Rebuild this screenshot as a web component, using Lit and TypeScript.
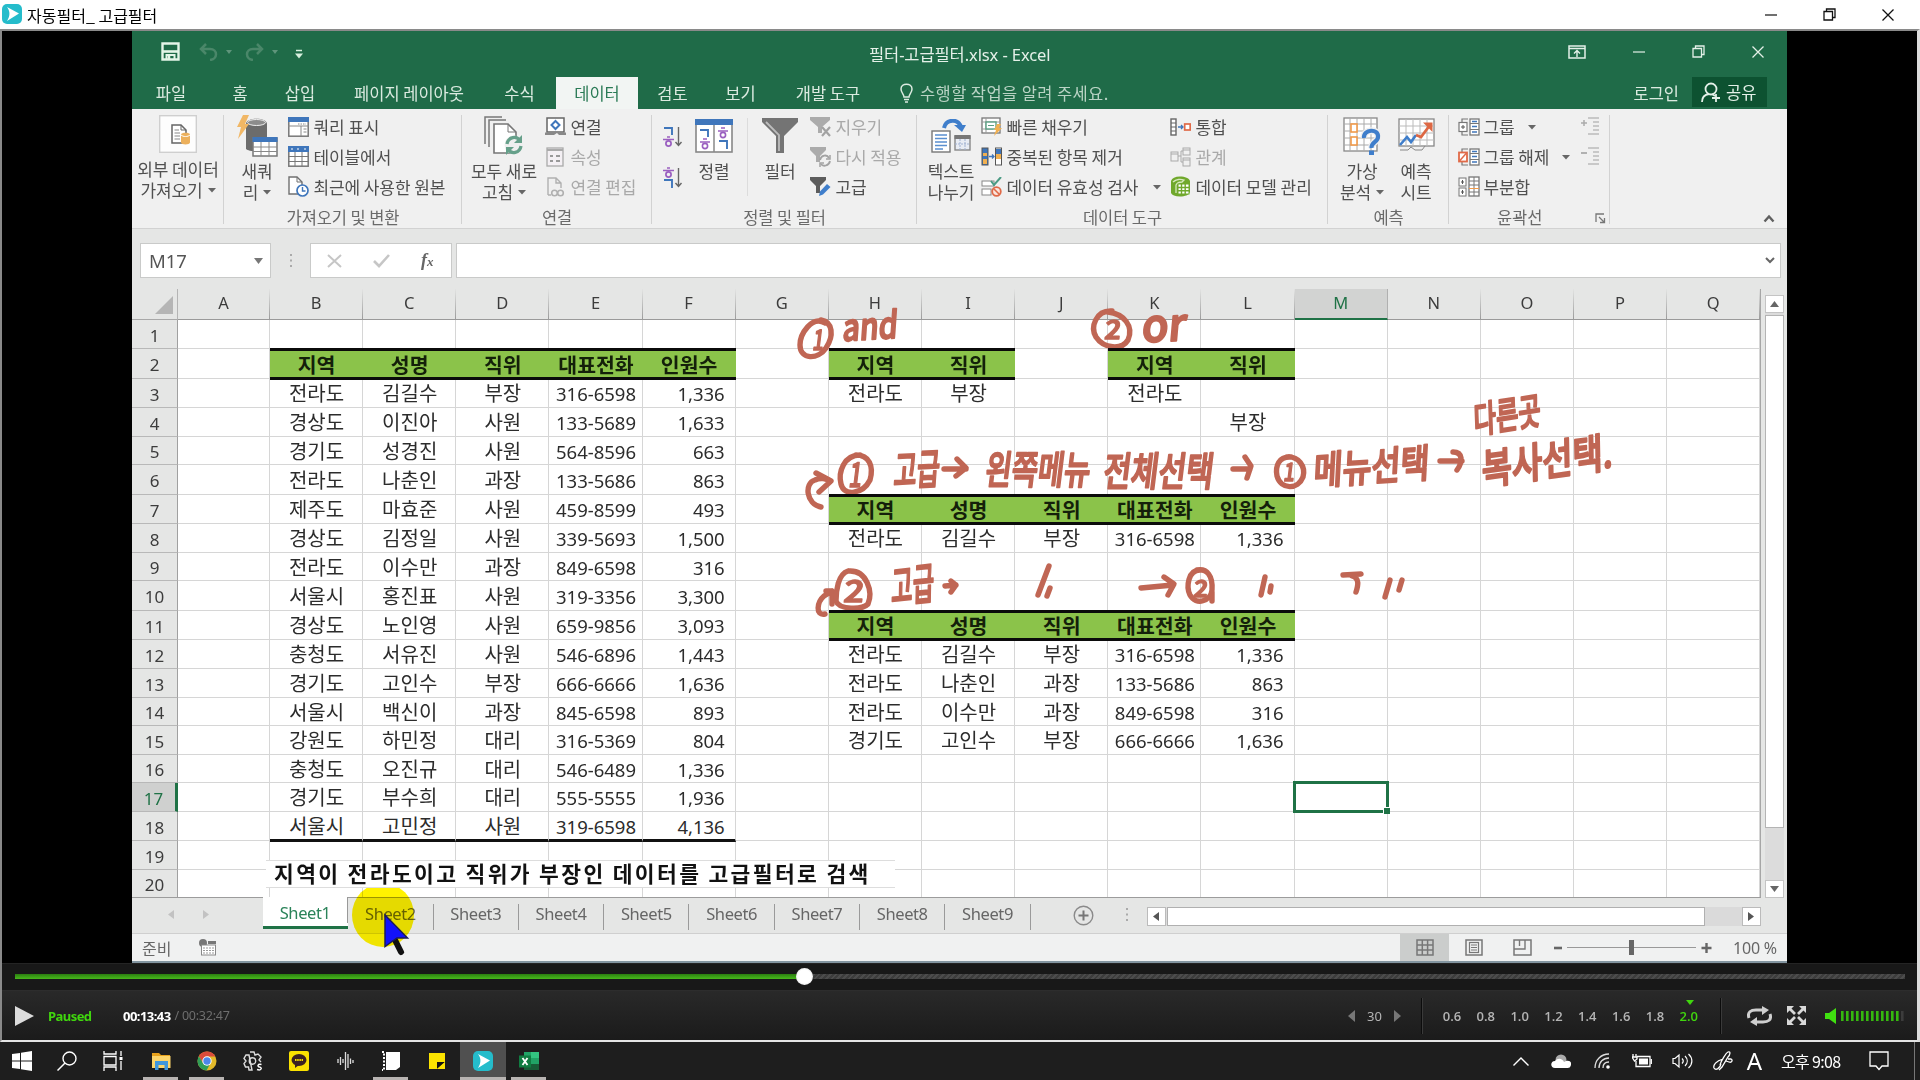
import { LitElement, html, svg, css, nothing } from "lit";
import { customElement } from "lit/decorators.js";
import { classMap } from "lit/directives/class-map.js";

const ic = (w: number, h: number, body: unknown, cls = "") =>
  html`<svg class=${cls} width=${w} height=${h} viewBox="0 0 ${w} ${h}" fill="none">${body}</svg>`;

const caret = html`<svg class="caret" width="8" height="5" viewBox="0 0 8 5"><path d="M0 0H8L4 4.6Z" fill="#666"/></svg>`;

/* ---------- ribbon icons ---------- */
const I = {
  external: ic(38, 38, svg`<rect x=".7" y=".7" width="36.6" height="36.6" fill="#fdfdfd" stroke="#cfcfcf" stroke-width="1.4"/>
    <path d="M13 10H22L27 15V28H13Z" fill="#fff" stroke="#666" stroke-width="1.5"/><path d="M22 10V15H27" stroke="#666"/>
    <path d="M15.5 15H20M15.5 18H21M15.5 21H21M15.5 24H21" stroke="#888" stroke-width="1.2"/>
    <path d="M22 19.5C22 17 31 17 31 19.5V27.5C31 30 22 30 22 27.5Z" fill="#ecb05c"/><path d="M22 20C24 22 29 22 31 20" stroke="#fff"/>`),
  newQuery: ic(42, 44, svg`<path d="M10 10C10 3 31 3 31 10V35C28 38 13 38 10 35Z" fill="#6c6c6c"/><ellipse cx="20.500" cy="8.500" rx="9" ry="3" fill="#8c8c8c" stroke="#efefef"/>
    <path d="M7 1H13L9 10H13L2 25L5 13H1Z" fill="#f1b765"/>
    <rect x="17" y="24" width="24" height="18" fill="#fff" stroke="#777" stroke-width="1.5"/><rect x="16.500" y="23" width="25" height="5" fill="#3f76bb"/>
    <path d="M17 33H41M17 37.500H41M25 28V42M33 28V42" stroke="#888"/>`),
  queryShow: ic(21, 20, svg`<rect x=".8" y=".8" width="19.4" height="18.400" fill="#fff" stroke="#777" stroke-width="1.500"/><rect x="0" y="0" width="21" height="5" fill="#3f76bb"/><path d="M0 9H21M13 9V19M15.500 12H18.500M15.500 15H18.500" stroke="#888"/><path d="M10 7H18" stroke="#888" stroke-dasharray="1.500 1"/>`),
  fromTable: ic(21, 21, svg`<rect x=".8" y=".8" width="19.4" height="19.400" fill="#fff" stroke="#777" stroke-width="1.500"/><rect x="0" y="0" width="21" height="6" fill="#3f76bb"/><path d="M3 3H5M9 3H12M16 3H18" stroke="#fff" stroke-dasharray="2 1"/><path d="M0 10.500H21M0 15.500H21M7 6V20M14 6V20" stroke="#777"/>`),
  recent: ic(21, 21, svg`<path d="M1 1H9L14 6V18H1Z" fill="#fff" stroke="#707070" stroke-width="1.400"/><path d="M9 1V6H14" stroke="#707070"/><circle cx="14.500" cy="14.500" r="5.500" fill="#fff" stroke="#3f76bb" stroke-width="1.700"/><path d="M14.500 11V15H17.500" stroke="#3f76bb" stroke-width="1.400"/>`),
  refreshAll: ic(40, 40, svg`<path d="M1 28V1H18M5 31V4H22" stroke="#777" stroke-width="1.500"/><path d="M10 8H24L32 16V37H10Z" fill="#fff" stroke="#777" stroke-width="1.600"/><path d="M24 8V16H32" stroke="#777"/>
    <circle cx="30" cy="29" r="9.500" fill="#efefef"/><path d="M23 28C24 21 33 19 36 25M37 30C36 37 27 39 24 33" stroke="#66a08a" stroke-width="3.200"/><path d="M38 19V27H30Z" fill="#66a08a"/><path d="M22 39V31H30Z" fill="#66a08a"/>`),
  conn: ic(21, 20, svg`<rect x="2" y="1" width="17" height="14" fill="#fff" stroke="#666" stroke-width="1.500"/><path d="M0 15.500H21V18H14L12 16L9 18H0Z" fill="#888"/><path d="M10.500 4L14.500 8L10.500 12L6.500 8Z" stroke="#3f76bb" stroke-width="2"/>`),
  props: ic(21, 20, svg`<rect x="2" y="1" width="16" height="18" fill="#f4f0f4" stroke="#aaa" stroke-width="1.300"/><path d="M2 3H18" stroke="#aaa" stroke-width="2"/><path d="M5 9H8M11 9H15M5 14H8M11 14H15" stroke="#999" stroke-width="2"/>`),
  editLink: ic(21, 20, svg`<path d="M3 18V1H11L16 6V11M3 18H6M11 1V6H16" stroke="#b0b0b0" stroke-width="1.400"/><circle cx="9.500" cy="16" r="2.800" stroke="#b0b0b0" stroke-width="1.600"/><circle cx="15.500" cy="16" r="2.800" stroke="#b0b0b0" stroke-width="1.600"/>`),
  sortAsc: ic(20, 22, svg`<path d="M1 2H9V9" stroke="#3f76bb" stroke-width="1.900"/><path d="M4 11H7M0 13.500H11" stroke="#9a5fc0" stroke-width="1.700"/><circle cx="5.500" cy="17.500" r="2.600" stroke="#9a5fc0" stroke-width="1.700"/><path d="M15.500 1V19M12.500 16L15.500 19.500L18.500 16" stroke="#666" stroke-width="1.400"/>`),
  sortDesc: ic(20, 22, svg`<path d="M4 1H7M0 3.500H11" stroke="#9a5fc0" stroke-width="1.700"/><circle cx="5.500" cy="7.500" r="2.600" stroke="#9a5fc0" stroke-width="1.700"/><path d="M1 13H9V21" stroke="#3f76bb" stroke-width="1.900"/><path d="M15.500 1V19M12.500 16L15.500 19.500L18.500 16" stroke="#666" stroke-width="1.400"/>`),
  sort: ic(38, 34, svg`<rect x="1" y="1" width="36" height="32" fill="#fff" stroke="#888" stroke-width="1.600"/><rect x="0" y="0" width="38" height="6" fill="#3f76bb"/><path d="M19 6V33" stroke="#888" stroke-width="1.500"/>
    <path d="M5 11H13V18" stroke="#3f76bb" stroke-width="1.900"/><path d="M8 20H12M5 23H15" stroke="#9a5fc0" stroke-width="1.600"/><circle cx="10" cy="27" r="2.600" stroke="#9a5fc0" stroke-width="1.600"/>
    <path d="M26 9H30M23 12H33" stroke="#9a5fc0" stroke-width="1.600"/><circle cx="28" cy="16" r="2.600" stroke="#9a5fc0" stroke-width="1.600"/><path d="M24 22H32V30" stroke="#3f76bb" stroke-width="1.900"/>`),
  filter: ic(36, 36, svg`<path d="M0 0H36V4L22 18V35H14V18L0 4Z" fill="#747474"/><path d="M4 4L17 17V33" stroke="#bdbdbd" stroke-width="1.800"/>`),
  clear: ic(22, 20, svg`<path d="M0 0H20V3L12 10V16H8V10L0 3Z" fill="#ababab"/><path d="M12 10L20 19M20 10L12 19" stroke="#a2a2a2" stroke-width="2.200"/>`),
  reapply: ic(22, 20, svg`<path d="M0 0H16V3L10 9V15H6V9L0 3Z" fill="#ababab"/><path d="M10 13C11 8 17 7 19 11M20 14C19 19 13 20 11 17" stroke="#a2a2a2" stroke-width="1.800"/><path d="M20 8V12H16M10 20V16H14" stroke="#a2a2a2" stroke-width="1.500"/>`),
  advanced: ic(22, 20, svg`<path d="M0 0H16V3L10 9V16H6V9L0 3Z" fill="#5c5c5c"/><path d="M9 19L10 14.500L17 7L20.500 10L13 17.500Z" fill="#3f7ecb"/>`),
  textCols: ic(40, 34, svg`<rect x="1" y="12" width="18" height="21" fill="#fff" stroke="#777" stroke-width="1.400"/><path d="M4 16H16M4 19.500H16M4 23H16M4 26.500H16M4 30H12" stroke="#5a8fd0" stroke-width="1.400"/>
    <path d="M13 9C15 0 27 -1 30 8" stroke="#3f7ecb" stroke-width="4"/><path d="M23 6H35L31 13Z" fill="#3f7ecb"/>
    <rect x="24" y="17" width="15" height="14" fill="#e8ecf4" stroke="#888" stroke-width="1.400"/><rect x="23.500" y="16" width="16" height="4" fill="#777"/><path d="M24 25H39M29 20V31M34 20V31" stroke="#9fb0d0" stroke-dasharray="2 1"/>`),
  flash: ic(21, 19, svg`<rect x="1" y="1" width="18" height="15" fill="#fff" stroke="#777" stroke-width="1.300"/><path d="M1 5H19M1 12H12M5 1V16" stroke="#999"/><rect x="5" y="5" width="10" height="7" stroke="#5ba083" fill="#fff" stroke-width="1.400"/><path d="M7 8.500H13" stroke="#5ba083"/><path d="M16 7H20L18 11H21L13 19L15 13H13Z" fill="#f1b050"/>`),
  dup: ic(21, 19, svg`<rect x="1" y="1" width="6" height="17" fill="#3f76bb" stroke="#555"/><rect x="2" y="6" width="4" height="3" fill="#f1b050"/><rect x="2" y="12" width="4" height="5" fill="#f1b050"/><path d="M8 9.500H13M11 7.500L13 9.500L11 11.500" stroke="#3f76bb" stroke-width="1.300"/><rect x="14.500" y="1" width="6" height="17" fill="#fff" stroke="#555"/><rect x="15" y="2" width="5" height="5" fill="#3f76bb"/><rect x="15" y="7" width="5" height="5" fill="#f1b050"/>`),
  valid: ic(21, 20, svg`<rect x="1" y="4" width="12" height="5" fill="#fff" stroke="#888"/><rect x="1" y="12" width="9" height="6" fill="#fff" stroke="#888"/><path d="M10 4L13 8L20 0" stroke="#4b9b84" stroke-width="2"/><circle cx="15.500" cy="14.500" r="4.300" fill="#fbe5dc" stroke="#e06a48" stroke-width="1.800"/><path d="M12.500 11.500L18.500 17.500" stroke="#e06a48" stroke-width="1.600"/>`),
  consol: ic(21, 18, svg`<rect x="1" y="1" width="5" height="16" fill="#fff" stroke="#666" stroke-width="1.400"/><path d="M1 5H6M1 9H6M1 13H6" stroke="#666"/><path d="M8 9H13M11 7L13 9L11 11" stroke="#3f76bb" stroke-width="1.300"/><rect x="14.700" y="6" width="5.500" height="6" stroke="#e06a48" stroke-width="1.700" fill="#fff"/>`),
  rel: ic(21, 20, svg`<rect x="1" y="5" width="7" height="9" stroke="#aaa"/><rect x="13" y="1" width="7" height="7" stroke="#aaa"/><rect x="13" y="11" width="7" height="8" stroke="#aaa"/><path d="M8 9H11V4H13M11 9V15H13M1 7H8M13 3H20M13 13H20" stroke="#aaa"/>`),
  model: ic(21, 21, svg`<path d="M10 .5C15 .5 19 2 20 5V16C19 19 15 20.500 10 20.500C5 20.500 2 19 1 17V5C2 2 5 .5 10 .5Z" fill="#70a82c"/><path d="M3 6C6 3 11 3 14 4L12 6C9 6 7 7 6 9V17" stroke="#d6e9be" stroke-width="1.300"/><rect x="8" y="8" width="11" height="10" fill="#fff" stroke="#70a82c"/><path d="M8 11.500H19M8 14.800H19M11.500 8V18M15.200 8V18" stroke="#70a82c" stroke-width="1.400"/>`),
  whatif: ic(38, 38, svg`<rect x="1" y="1" width="33" height="33" fill="#fff" stroke="#888" stroke-width="1.300"/><path d="M7 1V34M14 1V34M21 1V34M28 1V34M1 7H34M1 14H34M1 21H34M1 28H34" stroke="#aaa"/><rect x="8" y="7" width="6" height="8" fill="#fff" stroke="#f09a4a" stroke-width="1.600"/><rect x="8" y="20" width="6" height="8" fill="#fff" stroke="#f09a4a" stroke-width="1.600"/>
    <path d="M21 21C20 12 36 11 35 20C35 25 28 25 28.500 31" stroke="#efefef" stroke-width="7"/><path d="M21 21C20 12 36 11 35 20C35 25 28 25 28.500 31" stroke="#3f7ecb" stroke-width="4.200"/><rect x="26" y="33.500" width="5" height="4.500" fill="#3f7ecb"/>`),
  forecast: ic(37, 36, svg`<rect x="1" y="1" width="35" height="27" fill="#fff" stroke="#888" stroke-width="1.300"/><path d="M8 1V28M15 1V28M22 1V28M29 1V28M1 8H36M1 15H36M1 22H36" stroke="#bbb"/><path d="M2 32H10L13 29L17 32H24L27 28" stroke="#888"/><path d="M2 27L9 19L13 24L18 17" stroke="#3f7ecb" stroke-width="2.600"/><path d="M18 17L23 19L32 7" stroke="#dd6844" stroke-width="2.800"/><path d="M25 4.500H34.500V14Z" fill="#dd6844"/>`),
  group: ic(22, 18, svg`<path d="M4 4V1H10M4 14V17H10" stroke="#777" stroke-width="1.200"/><rect x="1" y="4.500" width="8" height="9" fill="#fff" stroke="#777" stroke-width="1.200"/><path d="M5 7V11M3 9H7" stroke="#555"/><rect x="12" y="1" width="9" height="16" fill="#fff" stroke="#777" stroke-width="1.300"/><path d="M12 5.500H21M12 11.500H21" stroke="#777"/><path d="M14 3.500H19M14 8.500H19M14 14H19" stroke="#3f76bb" stroke-width="1.400"/>`),
  ungroup: ic(22, 18, svg`<path d="M4 4V1H10M4 14V17H10" stroke="#777" stroke-width="1.200"/><rect x="1" y="4.500" width="8" height="9" fill="#fff" stroke="#e06a48" stroke-width="1.800"/><path d="M1.500 13L8.500 5" stroke="#e06a48" stroke-width="1.500"/><rect x="12" y="1" width="9" height="16" fill="#fff" stroke="#777" stroke-width="1.300"/><path d="M12 5.500H21M12 11.500H21" stroke="#777"/><path d="M14 3.500H19M14 8.500H19M14 14H19" stroke="#3f76bb" stroke-width="1.400"/>`),
  subtotal: ic(22, 21, svg`<rect x="1" y="2" width="7" height="8" fill="#fff" stroke="#777"/><rect x="1" y="12" width="7" height="8" fill="#fff" stroke="#777"/><path d="M4.500 4V8M3 6H6M4.500 14V18M3 16H6" stroke="#555"/><rect x="11" y="1" width="10" height="19" fill="#fff" stroke="#777" stroke-width="1.300"/><path d="M11 5H21M11 9H21M11 16H21M16 1V20" stroke="#777"/><path d="M11 12.500H21" stroke="#f09a4a"/>`),
  showDetail: ic(19, 18, svg`<path d="M0 6H6M3 3V9" stroke="#aaa" stroke-width="1.500"/><path d="M7 1H18M12 5H18M12 9H18M12 13H18M7 17H18" stroke="#bbb" stroke-width="1.500"/>`),
  hideDetail: ic(19, 18, svg`<path d="M0 6H6" stroke="#aaa" stroke-width="1.800"/><path d="M7 1H18M12 5H18M12 9H18M12 13H18M7 17H18" stroke="#bbb" stroke-width="1.500"/>`),
};

const BASE = css`
  :host { display: block; font-family: "Noto Sans", "Noto Sans CJK KR", sans-serif; box-sizing: border-box; }
  * { box-sizing: border-box; }
  svg { display: block; flex: none; }
`;

@customElement("excel-ribbon")
class ExcelRibbon extends LitElement {
  static styles = [BASE, css`
    .ribbon { display: flex; height: 120px; background: #f0f0f0; border-bottom: 1px solid #d2d2d2; color: #505050; font: 17px/21px "Noto Sans CJK KR", sans-serif; letter-spacing: -.1px; }
    .group { display: flex; flex-direction: column; position: relative; flex: none; }
    .group::after { content: ""; position: absolute; right: 0; top: 6px; width: 1px; height: 109px; background: #d2d2d2; }
    .body { display: flex; height: 99px; }
    .label { text-align: center; color: #6a6a6a; line-height: 21px; display: flex; justify-content: center; font-size: 16.5px; white-space: nowrap; }
    .big { display: flex; flex-direction: column; align-items: center; flex: none; white-space: nowrap; text-align: center; }
    .slot { height: 51px; display: flex; align-items: center; padding-top: 2px; }
    .b91 .slot { height: 49px; padding: 0; }
    .caret { display: inline-block; vertical-align: 4px; margin-left: 5px; }
    .rows { display: flex; flex-direction: column; padding-top: 2px; flex: none; }
    .row { display: flex; align-items: center; height: 30px; white-space: nowrap; }
    .row > .box { width: 25.5px; flex: none; padding-top: 1px; }
    .off { color: #a9a9a9; }
    .w91 { width: 92px; } .w238 { width: 238px; } .w190 { width: 190px; } .w265 { width: 265px; } .w411 { width: 411px; } .w121 { width: 121px; } .w161 { width: 161px; }
    .b91 { width: 92px; } .b58 { width: 56px; margin: 0 3px 0 5px; } .b78 { width: 78px; margin: 0 2px 0 3px; } .b60 { width: 60px; } .b56 { width: 56px; margin: 0 2px 0 6px; } .b54 { width: 54px; }
    .first { margin-left: 7px; }
    .sorts { display: flex; flex-direction: column; gap: 19px; padding-top: 17px; margin-left: 11px; width: 21px; }
    .divider { width: 1px; height: 78px; margin: 9px 2px 0 3px; background: #dcdcdc; }
    .colA { width: 189px; } .out { width: 123px; margin-left: 9px; }
    .gap1 { margin-left: 8px; } .gap2 { margin-left: 10px; }
    .launch { margin: 6px 0 0 0; }
    .lab-out { justify-content: flex-start; padding-left: 48px; gap: 53px; }
    .end { flex: 1; display: flex; justify-content: flex-end; align-items: flex-end; padding: 0 12px 5px 0; }
  `];
  big(cls: string, icon: unknown, a: string, b?: string, drop = false) {
    return html`<div class="big ${cls}"><div class="slot">${icon}</div><div>${a}${b ? html`<br>${b}${drop ? caret : nothing}` : nothing}</div></div>`;
  }
  row(icon: unknown, t: string, off = false, drop = "") {
    return html`<div class=${classMap({ row: true, off })}><div class="box">${icon}</div>${t}${drop ? html`<span class=${drop}>${caret}</span>` : nothing}</div>`;
  }
  render() {
    return html`<div class="ribbon">
      <div class="group w91"><div class="body">${this.big("b91", I.external, "외부 데이터", "가져오기", true)}</div></div>
      <div class="group w238"><div class="body">${this.big("b58", I.newQuery, "새쿼", "리", true)}
        <div class="rows">${this.row(I.queryShow, "쿼리 표시")}${this.row(I.fromTable, "테이블에서")}${this.row(I.recent, "최근에 사용한 원본")}</div></div>
        <div class="label">가져오기 및 변환</div></div>
      <div class="group w190"><div class="body">${this.big("b78", I.refreshAll, "모두 새로", "고침", true)}
        <div class="rows">${this.row(I.conn, "연결")}${this.row(I.props, "속성", true)}${this.row(I.editLink, "연결 편집", true)}</div></div>
        <div class="label">연결</div></div>
      <div class="group w265"><div class="body"><div class="sorts">${I.sortAsc}${I.sortDesc}</div>
        ${this.big("b60", I.sort, "정렬")}<div class="divider"></div>${this.big("b60", I.filter, "필터")}
        <div class="rows">${this.row(I.clear, "지우기", true)}${this.row(I.reapply, "다시 적용", true)}${this.row(I.advanced, "고급")}</div></div>
        <div class="label">정렬 및 필터</div></div>
      <div class="group w411"><div class="body">${this.big("b56", I.textCols, "텍스트", "나누기")}
        <div class="rows colA">${this.row(I.flash, "빠른 채우기")}${this.row(I.dup, "중복된 항목 제거")}${this.row(I.valid, "데이터 유효성 검사", false, "gap2")}</div>
        <div class="rows">${this.row(I.consol, "통합")}${this.row(I.rel, "관계", true)}${this.row(I.model, "데이터 모델 관리")}</div></div>
        <div class="label">데이터 도구</div></div>
      <div class="group w121"><div class="body"><div class="first"></div>${this.big("b54", I.whatif, "가상", "분석", true)}${this.big("b54", I.forecast, "예측", "시트")}</div>
        <div class="label">예측</div></div>
      <div class="group w161"><div class="body"><div class="rows out">${this.row(I.group, "그룹", false, "gap1")}${this.row(I.ungroup, "그룹 해제", false, "gap1")}${this.row(I.subtotal, "부분합")}</div>
        <div class="rows"><div class="row">${I.showDetail}</div><div class="row">${I.hideDetail}</div></div></div>
        <div class="label lab-out">윤곽선${ic(11, 11, svg`<path d="M1 9V1H9M4 4L9 9M9.500 5V9.500H5" stroke="#777" stroke-width="1.300"/>`, "launch")}</div></div>
      <div class="end">${ic(12, 9, svg`<path d="M1.500 7.500L6 2.500L10.500 7.500" stroke="#606060" stroke-width="2.400"/>`)}</div>
    </div>`;
  }
}

type Cell = { t: string; k?: "h" | "n" | "c" };
const COLS = "ABCDEFGHIJKLMNOPQ".split("");
const EDGE = [320, 349, 379, 408, 437, 465, 495, 524, 553, 581, 611, 640, 669, 698, 726, 755, 783, 812, 841, 870, 898];
const HEAD = ["지역", "성명", "직위", "대표전화", "인원수"];
const MAIN = [
  "전라도 김길수 부장 316-6598 1,336", "경상도 이진아 사원 133-5689 1,633", "경기도 성경진 사원 564-8596 663",
  "전라도 나춘인 과장 133-5686 863", "제주도 마효준 사원 459-8599 493", "경상도 김정일 사원 339-5693 1,500",
  "전라도 이수만 과장 849-6598 316", "서울시 홍진표 사원 319-3356 3,300", "경상도 노인영 사원 659-9856 3,093",
  "충청도 서유진 사원 546-6896 1,443", "경기도 고인수 부장 666-6666 1,636", "서울시 백신이 과장 845-6598 893",
  "강원도 하민정 대리 316-5369 804", "충청도 오진규 대리 546-6489 1,336", "경기도 부수희 대리 555-5555 1,936",
  "서울시 고민정 사원 319-6598 4,136",
].map((r) => r.split(" "));
const OR = ["전라도 김길수 부장 316-6598 1,336", "전라도 나춘인 과장 133-5686 863", "전라도 이수만 과장 849-6598 316", "경기도 고인수 부장 666-6666 1,636"].map((r) => r.split(" "));

const cells = new Map<string, Cell>();
const put = (col: number, row: number, vals: string[], head = false) =>
  vals.forEach((t, i) => t && cells.set(`${col + i}:${row}`, { t, k: head ? "h" : i === 4 ? "n" : "c" }));
put(1, 2, HEAD, true);
MAIN.forEach((r, i) => put(1, 3 + i, r));
put(7, 2, ["지역", "직위"], true); put(7, 3, ["전라도", "부장"]);
put(10, 2, ["지역", "직위"], true); put(10, 3, ["전라도"]); put(11, 4, ["부장"]);
put(7, 7, HEAD, true); put(7, 8, MAIN[0]);
put(7, 11, HEAD, true); OR.forEach((r, i) => put(7, 12 + i, r));

@customElement("sheet-grid")
class SheetGrid extends LitElement {
  static styles = [BASE, css`
    .wrap { display: flex; height: 609px; background: #e5e6e5; }
    .grid { display: grid; width: 1629px; height: 609px; grid-template-columns: 46px 92px repeat(16, 93.15px); overflow: hidden; border-bottom: 1px solid #9c9c9c; border-right: 1px solid #a6a6a6; position: relative; }
    .corner { display: flex; justify-content: flex-end; align-items: flex-end; padding: 0 4px 5px 0; border-bottom: 1px solid #a8a8a8; border-right: 1px solid #b4b4b4; }
    .ch { text-align: center; font-size: 16.5px; line-height: 28px; color: #3c3c3c; border-bottom: 1px solid #a4a4a4; border-right: 1px solid; border-image: linear-gradient(#e5e6e5, #999) 1; }
    .ch.sel { background: #d2d3d2; color: #1f7246; border-image: none; border-color: #b0b0b0; border-bottom: 2px solid #1f7246; }
    .rh { text-align: center; font-size: 17px; color: #3c3c3c; border-bottom: 1px solid #b8b8b8; border-right: 1px solid #a0a0a0; display: flex; align-items: center; justify-content: center; padding-top: 2px; }
    .rh.sel { background: #cfd0cf; color: #1f7246; border-right: 3px solid #1f7246; }
    .c { background: #fff; border-right: 1px solid #d6d6d6; border-bottom: 1px solid #d6d6d6; display: flex; align-items: center; justify-content: center; font: 20px/24px "Noto Sans", "Noto Sans CJK KR", sans-serif; color: #2c2c2c; white-space: nowrap; min-width: 0; position: relative; padding: 2px 0 0 1px; }
    .c.num { font-size: 18.500px; }
    .c.n { justify-content: flex-end; padding-right: 10px; font-size: 18.500px; }
    .c.h { background: #8bc34a; border: 0; border-top: 3px solid #0b0b0b; border-bottom: 3px solid #0b0b0b; margin: -1px 0; padding: 0 0 1px 0; font: 700 20.500px/22px "Noto Sans CJK KR", sans-serif; color: #14200a; z-index: 1; }
    .c.end { border-bottom: 3px solid #111; margin-bottom: -1px; z-index: 1; }
    .pick { position: absolute; left: -2px; top: -2px; right: -2px; bottom: -2px; border: 3px solid #1f7246; z-index: 2; }
    .pick::after { content: ""; position: absolute; right: -4px; bottom: -4px; width: 6px; height: 6px; background: #1f7246; border: solid #fff; border-width: 1px 0 0 1px; box-sizing: content-box; }
    .note { position: absolute; left: 134px; top: 571px; width: 629px; height: 28px; background: #fff; border: solid #ddd; border-width: 1px 0; z-index: 3; font: 700 21.500px/24px "Noto Sans CJK KR", sans-serif; letter-spacing: 2.350px; padding-left: 8px; color: #111; white-space: nowrap; }
    .scroll { flex: 1; display: flex; flex-direction: column; margin-left: 4px; padding: 6px 0 0 0; width: 20px; }
    .sb { width: 19px; height: 18px; background: #fff; border: 1px solid #c4c4c4; display: flex; align-items: center; justify-content: center; }
    .track { width: 19px; flex: 1; background: #dcdcdc; padding-top: 2px; }
    .thumb { height: 513px; background: #fff; border: 1px solid #b4b4b4; }
  `];
  render() {
    const rows = EDGE.slice(1).map((e, i) => `${e - EDGE[i]}px`).join(" ");
    return html`<div class="wrap"><div class="grid" style="grid-template-rows:31px ${rows}">
      <div class="corner">${ic(18, 18, svg`<path d="M18 0V18H0Z" fill="#b5b5b5"/>`)}</div>
      ${COLS.map((c) => html`<div class=${classMap({ ch: true, sel: c === "M" })}>${c}</div>`)}
      ${EDGE.slice(1).map((_, r) => html`<div class=${classMap({ rh: true, sel: r === 16 })}>${r + 1}</div>
        ${COLS.map((_c, c) => {
          const d = cells.get(`${c}:${r + 1}`);
          return html`<div class=${classMap({ c: true, h: d?.k === "h", n: d?.k === "n", num: /^\d/.test(d?.t ?? ""), end: r === 17 && c > 0 && c < 6 })}>${d?.t ?? nothing}${c === 12 && r === 16 ? html`<div class="pick"></div>` : nothing}</div>`;
        })}`)}
      <div class="note">지역이 전라도이고 직위가 부장인 데이터를 고급필터로 검색</div>
    </div>
    <div class="scroll"><div class="sb">${ic(9, 6, svg`<path d="M4.500 0L9 6H0Z" fill="#666"/>`)}</div><div class="track"><div class="thumb"></div></div><div class="sb">${ic(9, 6, svg`<path d="M0 0H9L4.500 6Z" fill="#666"/>`)}</div></div></div>`;
  }
}

@customElement("ink-layer")
class InkLayer extends LitElement {
  static styles = [BASE, css`
    .ink { width: 860px; height: 330px; overflow: visible; }
    .s { fill: none; stroke: #c06654; stroke-width: 5.400; stroke-linecap: round; stroke-linejoin: round; }
    .t { fill: #c06654; stroke: #c06654; stroke-width: 1.700; stroke-linejoin: round; font-family: "Noto Sans CJK KR", sans-serif; font-weight: 500; }
  `];
  word(t: string, x: number, base: number, w: number, size: number, rot = 0, sy = 1) {
    return svg`<text class="t" font-size=${size} textLength=${w} lengthAdjust="spacingAndGlyphs" transform="translate(${x} ${base}) rotate(${rot}) skewX(-7) scale(1 ${sy})">${t}</text>`;
  }
  render() {
    return html`<svg class="ink" viewBox="790 300 860 330">
      <path class="s" d="M825 323C812 315 800 334 800 345C800 360 818 360 826 348C834 336 833 322 821 320"/>
      ${this.word("1", 812, 350, 11, 28, 0)}
      ${this.word("and", 842, 341, 55, 32, -3, 1.15)}
      <path class="s" d="M1112 311C1096 310 1090 327 1096 337C1104 349 1122 350 1128 340C1134 326 1124 314 1108 312"/>
      ${this.word("2", 1104, 339, 16, 26, 0)}
      ${this.word("or", 1141, 342, 44, 36, -2, 1.25)}

      <path class="s" d="M821 507C806 504 804 483 815 480C821 477 826 479 831 481M816 473L831 481L819 492"/>
      <path class="s" d="M860 455C844 455 838 472 841 484C844 497 863 494 870 480C874 466 869 455 856 455"/>
      ${this.word("1", 848, 487, 13, 34)}
      ${this.word("고급", 893, 486, 46, 36, -3, 1.15)}
      <path class="s" d="M944 469H966M957 459L966 468L956 476"/>
      ${this.word("왼쪽메뉴", 984, 484, 105, 34, 0, 1.15)}
      ${this.word("전체선택", 1102, 486, 110, 34, 0, 1.18)}
      <path class="s" d="M1233 469H1250M1245 457L1251 466L1247 478"/>
      <path class="s" d="M1291 457C1279 456 1275 466 1277 476C1281 490 1298 490 1303 477C1306 466 1298 456 1287 457"/>
      ${this.word("1", 1283, 481, 11, 25)}
      ${this.word("메뉴선택", 1313, 485, 116, 34, -4, 1.15)}
      <path class="s" d="M1440 461H1462M1453 452C1463 452 1463 462 1457 470"/>
      ${this.word("다른곳", 1474, 434, 68, 32, -9, 1.15)}
      ${this.word("복사선택.", 1482, 485, 132, 34, -8, 1.22)}

      <path class="s" d="M825 614C815 616 817 602 824 596L832 591M826 591L832 591L832 604"/>
      <path class="s" d="M848 571C838 574 836 591 836 601C839 610 862 610 868 604C873 592 867 570 849 571"/>
      ${this.word("2", 843, 602, 20, 30)}
      ${this.word("고급", 891, 603, 43, 36, -6, 1.2)}
      <path class="s" d="M945 586L956 585M951 581L956 585L951 592"/>
      <path class="s" d="M1049 566L1038 595M1050 588L1047 596"/>
      <path class="s" d="M1141 588L1173 585M1164 577L1174 584L1168 595"/>
      <path class="s" d="M1200 570C1188 570 1186 587 1190 595C1196 606 1211 601 1212 590C1213 576 1207 568 1197 570M1212 592V601"/>
      ${this.word("2", 1193, 597, 14, 23)}
      <path class="s" d="M1265 577L1261 595M1271 586L1270 592"/>
      <path class="s" d="M1343 575L1361 574M1352 576C1360 578 1358 586 1356 592"/>
      <path class="s" d="M1390 580L1385 597M1402 580L1399 590"/>
    </svg>`;
  }
}

const TABS: [string, number, string?][] = [["파일", 78], ["홈", 60], ["삽입", 60], ["페이지 레이아웃", 158], ["수식", 68, "pull"], ["데이터", 82, "on"], ["검토", 69], ["보기", 67], ["개발 도구", 108]];
const logo = ic(20, 20, svg`<rect width="20" height="20" rx="5" fill="#25bccb"/><path d="M5 3L17 9.500L5 17C8 12 8.500 8 5 3Z" fill="#fff"/>`);
const winBtns = (c: string) => html`
  ${ic(12, 12, svg`<path d="M0 6H12" stroke=${c} stroke-width="1.200"/>`)}
  ${ic(13, 13, svg`<path d="M1 3.500H9.500V12H1ZM3.500 3V1H12V9.500H10" stroke=${c} stroke-width="1.300"/>`)}
  ${ic(12, 12, svg`<path d="M.5 .5L11.500 11.500M11.500 .5L.5 11.500" stroke=${c} stroke-width="1.300"/>`)}`;

const TASKS: { i: unknown; cls?: string }[] = [
  { cls: "n w1", i: ic(20, 20, svg`<path d="M0 3L8 2V9.500H0ZM9 1.800L20 0V9.500H9ZM0 10.500H8V18L0 17ZM9 10.500H20V20L9 18.200Z" fill="#fff"/>`) },
  { cls: "n", i: ic(20, 20, svg`<circle cx="12.500" cy="7.500" r="6.500" stroke="#fff" stroke-width="1.400"/><path d="M8 12L.5 19.500" stroke="#fff" stroke-width="1.500"/>`) },
  { cls: "n w3", i: ic(20, 20, svg`<path d="M1 0V3H13V0M1 20V16H13V20M1 5.500H13V14H1ZM18 0V5M18 10V19" stroke="#fff" stroke-width="1.300"/><rect x="16.500" y="6" width="3" height="3" fill="#fff"/>`) },
  { cls: "on", i: ic(19, 18, svg`<path d="M0 1H7L9 3H18V16H0Z" fill="#e8a21c"/><path d="M0 4H18.500V16H0Z" fill="#fcd56b"/><path d="M3 9H16V18H12.500V13H6.500V18H3Z" fill="#3f97dd"/>`) },
  { cls: "on", i: ic(20, 20, svg`<circle cx="10" cy="10" r="9.500" fill="#e2b92a"/><path d="M1.800 5.200A9.500 9.500 0 0 1 18.300 5.500H10L6 12Z" fill="#da4b3c"/><path d="M1.800 5.200A9.500 9.500 0 0 0 9.500 19.500L13 13L6 12Z" fill="#2f9d57"/><circle cx="10" cy="10" r="4.700" fill="#fff"/><circle cx="10" cy="10" r="3.700" fill="#4c86ea"/>`) },
  { i: ic(20, 20, svg`<path d="M7 1H11L12 4L15 3L18 6L16 9L18 11M9 19H6L5.500 16L2.500 16L1 12.500L3 10L1 7.500L3 4L6 4Z" stroke="#ddd" stroke-width="1.400"/><circle cx="9.500" cy="10" r="3.200" stroke="#ddd" stroke-width="1.400"/><path d="M18.500 13.500C14.500 12.500 14 15.500 16.500 16C19.500 16.500 18.500 20 14 18.500" stroke="#fff" stroke-width="1.400"/>`) },
  { i: ic(20, 20, svg`<rect width="20" height="20" rx="2" fill="#fae100"/><ellipse cx="10" cy="9" rx="7.500" ry="6" fill="#3b2222"/><path d="M6 13V17L10 14Z" fill="#3b2222"/><path d="M6 9H14" stroke="#fae100" stroke-width="2" stroke-dasharray="1.500 .700"/>`) },
  { i: ic(17, 20, svg`<path d="M1 8V12M3.500 6V14M6 8V12M8.500 1V19M11 3V17M13.500 7.500V13M16 9V12" stroke="#ddd" stroke-width="1.300"/>`) },
  { cls: "on", i: ic(20, 20, svg`<path d="M5 1H19V16L15 19H5Z" fill="#fff"/><path d="M1 1H3V19H1" stroke="#fff" stroke-width="2" stroke-dasharray="2 1.500"/>`) },
  { i: ic(16, 16, svg`<path d="M0 0H16V16H0Z" fill="#fbe300"/><path d="M8 16V9H16Z" fill="#111"/><path d="M8 16H16V9Z" fill="#fbe300" opacity=".85"/>`) },
  { cls: "on act", i: logo },
  { cls: "on", i: ic(20, 20, svg`<rect x="5" y="1" width="15" height="18" fill="#21a366"/><path d="M12 1H20V7H12Z" fill="#33c481"/><path d="M5 13H20V19H5Z" fill="#185c37"/><rect x="0" y="4.500" width="12" height="12" fill="#107c41"/><path d="M3.500 7L8.500 14M8.500 7L3.500 14" stroke="#fff" stroke-width="1.800"/>`) },
];

@customElement("app-root")
class AppRoot extends LitElement {
  static styles = [BASE, css`
    .page { width: 1920px; height: 1080px; overflow: hidden; background: #1d1d1d; display: flex; flex-direction: column; }
    .title { height: 29px; background: #fff; display: flex; align-items: center; padding: 0 26px 0 2px; font: 16px/28px "Noto Sans CJK KR", sans-serif; color: #000; }
    .title span { margin-left: 5px; flex: 1; }
    .title > svg { margin-bottom: 1px; }
    .wb { display: flex; align-items: center; gap: 46px; }
    .frame { height: 1013px; border: solid; border-width: 2px 3px 2px 2px; border-color: #8a8a8a #dcdcdc #e4e4e4 #8a8a8a; background: #000; display: flex; flex-direction: column; }
    .video { height: 932px; display: flex; padding-left: 130px; }
    .excel { width: 1655px; height: 932px; display: flex; flex-direction: column; background: #e5e6e5; position: relative; }
    .top { height: 46px; background: #1f6b48; display: flex; align-items: flex-start; color: #e4f0e8; padding: 0 23px 0 29px; }
    .qat { display: flex; align-items: center; height: 41px; width: 708px; }
    .m1 { margin-left: 19px; } .m2 { margin-left: 8px; } .m3 { margin-left: 13px; } .m4 { margin: 3px 0 0 17px; }
    .fname { flex: 1; font-size: 16.500px; line-height: 48px; letter-spacing: -.1px; }
    .top .wb { height: 41px; gap: 47px; }
    .tabs { height: 32px; background: #1f6b48; display: flex; color: #dbeae0; font: 16.500px/32px "Noto Sans CJK KR", sans-serif; white-space: nowrap; }
    .tab { text-align: center; flex: none; }
    .tab.on { background: #f2f5f3; color: #2a7a55; }
    .tab.pull { padding-right: 5px; }
    .tell { display: flex; align-items: center; gap: 7px; margin-left: 18px; flex: 1; color: #b9d3c4; letter-spacing: .4px; }
    .login { margin-right: 13px; }
    .share { width: 75px; height: 30px; background: #0d5231; display: flex; align-items: center; gap: 5px; padding-left: 9px; margin-right: 20px; color: #e4f0e8; }
    .fbar { display: flex; height: 60px; padding: 14px 6px 0 8px; flex: none; }
    .fb { height: 35px; background: #fff; border: 1px solid #c9cac9; display: flex; align-items: center; }
    .name { width: 131px; justify-content: space-between; padding: 0 7px 0 8px; font-size: 18.500px; color: #555; }
    .dots { width: 39px; display: flex; justify-content: center; align-items: center; height: 35px; }
    .fx { width: 142px; margin-right: 4px; padding-left: 16px; gap: 31px; }
    .f { font: italic 700 18px "Liberation Serif", serif; color: #666; }
    .f small { font-size: 13px; }
    .inp { flex: 1; justify-content: flex-end; padding-right: 5px; }
    .sheets { height: 36px; display: flex; border-bottom: 1px solid #cfcfcf; color: #666; font-size: 16.500px; line-height: 32px; flex: none; }
    .nav { width: 131px; display: flex; align-items: center; gap: 29px; padding: 0 0 2px 36px; }
    .sh { width: 85.300px; height: 33px; text-align: center; letter-spacing: -.4px; flex: none; padding: 0 1px 0 0; position: relative; }
    .sh::after { content: ""; position: absolute; right: 0; top: 6px; height: 26px; width: 1px; background: #9a9a9a; }
    .sh.on { background: #fff; color: #2a8359; height: 32px; border-bottom: 3px solid #1f7246; margin-top: -1px; }
    .sh.on::after { top: 0; background: #999; }
    .add { margin: 7px 0 0 42px; }
    .grip { margin: 10px 0 0 32px; }
    .hs { display: flex; margin: 9px 26px 0 19px; height: 19px; background: #dadada; flex: 1; justify-content: space-between; }
    .hb { width: 19px; height: 19px; background: #fff; border: 1px solid #bbb; display: flex; align-items: center; justify-content: center; }
    .ht { width: 538px; margin-right: 36px; border: 1px solid #b0b0b0; background: #fff; }
    .status { height: 27px; background: #f0f1f1; display: flex; align-items: center; color: #666; font-size: 16px; flex: none; padding-left: 10px; }
    .status .grow { flex: 1; }
    .macro { margin-left: 28px; }
    .view { width: 49px; height: 27px; display: flex; align-items: center; justify-content: center; }
    .view.on { background: #cbcdcc; }
    .pct { width: 45px; margin: 0 9px 0 20px; white-space: nowrap; font-size: 16px; letter-spacing: -.2px; }
    .strip { height: 2px; background: #8395a0; }
    .ink { position: absolute; left: 658px; top: 269px; }
    .spot { position: absolute; left: 220px; top: 852px; width: 62px; height: 64px; border-radius: 50%; background: #fff200; mix-blend-mode: multiply; }
    .ptr { position: absolute; left: 251px; top: 881px; }
    .seek { height: 27px; background: #181818; border-top: 1px solid #242424; padding: 10px 12px 0 13px; display: flex; }
    .done { width: 789px; height: 5px; background: linear-gradient(#2b7d10, #48b81c); position: relative; }
    .knob { position: absolute; right: -9px; top: -6px; width: 17px; height: 17px; border-radius: 50%; background: radial-gradient(#fff 55%, #c8c8c8); }
    .left { flex: 1; height: 5px; background: repeating-linear-gradient(135deg, #3c3c3c 0 2px, #4c4c4c 2px 4px); }
    .ctl { height: 50px; background: linear-gradient(#292929, #1b1b1b); border-top: 1px solid #2d2d2d; display: flex; align-items: center; font: 13px/20px "Noto Sans", sans-serif; color: #b4b4b4; padding-left: 13px; }
    .paused { color: #40d60e; font-weight: 700; width: 74px; margin-left: 13px; margin-right: 1px; letter-spacing: -.55px; font-size: 13px; }
    .time { color: #fff; font-weight: 700; letter-spacing: -.55px; font-size: 13px; }
    .total { color: #6e6e6e; letter-spacing: -.25px; font-size: 12.500px; margin-left: 4px; flex: 1; }
    .total i { font-style: normal; margin-right: 3px; }
    .skip { display: flex; align-items: center; gap: 12px; width: 73px; }
    .bar { width: 2px; height: 36px; background: linear-gradient(90deg, #0c0c0c 50%, #3a3a3a 50%); }
    .speeds { display: flex; width: 297px; padding-left: 12px; }
    .sp { width: 33.850px; text-align: center; font: 600 13px/20px "Open Sans", sans-serif; position: relative; }
    .sp.on { color: #40d60e; }
    .sp.on::before { content: ""; position: absolute; left: 14px; top: -6px; border: solid transparent; border-width: 5px 4px 0; border-top-color: #40d60e; }
    .loop { margin-left: 25px; } .full { margin-left: 15px; } .vol { margin: 0 12px 0 19px; }
    .task { height: 38px; display: flex; background: #1e1e1e; color: #fff; }
    .ti { width: 46px; height: 38px; display: flex; align-items: center; justify-content: center; position: relative; flex: none; }
    .ti.w1 { width: 44px; } .ti.n { width: 46px; } .ti.n.w1 { width: 44px; } .ti.w3 { margin-right: 2px; }
    .ti.on::after { content: ""; position: absolute; left: 5px; right: 6px; bottom: 0; height: 3px; background: #b8b4b2; }
    .ti.act { background: #505050; } .ti.act::after { left: 0; right: 0; }
    .tray { margin-left: auto; display: flex; align-items: center; padding-right: 5px; font: 16px/38px "Noto Sans CJK KR", sans-serif; }
    .t1 { margin-right: 22px; } .t2 { margin-right: 23px; } .t4 { margin-right: 20px; } .t5 { margin-right: 14px; }
    .ka { font: 400 24px/38px "Noto Sans", sans-serif; margin-right: 19px; }
    .clock { width: 62px; white-space: nowrap; letter-spacing: -.65px; margin-right: 26px; }
    .note { margin-right: 25px; }
    .peek { width: 1px; height: 38px; background: #777; }
  `];
  render() {
    return html`<div class="page">
      <div class="title">${logo}<span>자동필터_ 고급필터</span><div class="wb">${winBtns("#111")}</div></div>
      <div class="frame">
        <div class="video"><div class="excel">
          <div class="top">
            <div class="qat">
              ${ic(19, 19, svg`<path d="M1.500 1.500H17.500V17.500H1.500Z" stroke="#e4f5e8" stroke-width="2.400"/><path d="M2 9.500H17" stroke="#e4f5e8" stroke-width="2.600"/><path d="M5.500 18V13H13.500V18" stroke="#e4f5e8" stroke-width="2"/><path d="M8 14V17" stroke="#e4f5e8" stroke-width="2.500"/>`)}
              ${ic(19, 18, svg`<path d="M7 1L2 6L7 11M2 6H11C19 6 19 16 11 17" stroke="#4a8769" stroke-width="2.500"/>`, "m1")}
              ${ic(6, 4, svg`<path d="M0 0H6L3 4Z" fill="#5f957b"/>`, "m2")}
              ${ic(19, 18, svg`<path d="M12 1L17 6L12 11M17 6H8C0 6 0 16 8 17" stroke="#4a8769" stroke-width="2.500"/>`, "m3")}
              ${ic(6, 4, svg`<path d="M0 0H6L3 4Z" fill="#5f957b"/>`, "m2")}
              ${ic(8, 12, svg`<path d="M1 3.500H7" stroke="#d7f0de" stroke-width="1.500"/><path d="M0 6.500H8L4 11.500Z" fill="#d7f0de"/>`, "m4")}
            </div>
            <div class="fname">필터-고급필터.xlsx - Excel</div>
            <div class="wb">
              ${ic(18, 14, svg`<rect x="1" y="1" width="16" height="12" stroke="#e4f0e8" stroke-width="1.500"/><path d="M1 3.500H17M9 12V6M6 8.500L9 5.500L12 8.500" stroke="#e4f0e8" stroke-width="1.400"/>`)}
              ${winBtns("#e4f0e8")}
            </div>
          </div>
          <div class="tabs">
            ${TABS.map(([t, w, k]) => html`<div class="tab ${k ?? ""}" style="width:${w}px">${t}</div>`)}
            <div class="tell">${ic(13, 20, svg`<path d="M4 14C4 11 1 10 1 6C1 -.5 12 -.5 12 6C12 10 9 11 9 14ZM4 16.500H9M5 19H8" stroke="#dbeae0" stroke-width="1.500"/>`)}수행할 작업을 알려 주세요.</div>
            <div class="login">로그인</div>
            <div class="share">${ic(20, 21, svg`<circle cx="10" cy="7" r="5.500" stroke="#e4f0e8" stroke-width="1.800"/><path d="M1 20C1 15 4 12.500 8 12M11 12L14 14M15 12V20M11 16H19" stroke="#e4f0e8" stroke-width="1.800"/>`)}공유</div>
          </div>
          <excel-ribbon></excel-ribbon>
          <div class="fbar">
            <div class="fb name">M17${ic(9, 6, svg`<path d="M0 0H9L4.500 6Z" fill="#777"/>`)}</div>
            <div class="dots">${ic(2, 14, svg`<path d="M1 0V14" stroke="#aaa" stroke-width="2" stroke-dasharray="2 3.500"/>`)}</div>
            <div class="fb fx">
              ${ic(15, 14, svg`<path d="M1 1L14 13M14 1L1 13" stroke="#c6c6c6" stroke-width="2"/>`)}
              ${ic(17, 14, svg`<path d="M1 7L6 12L16 1" stroke="#c6c6c6" stroke-width="2.600"/>`)}
              <span class="f">f<small>x</small></span>
            </div>
            <div class="fb inp">${ic(10, 7, svg`<path d="M1 1L5 5L9 1" stroke="#666" stroke-width="2"/>`)}</div>
          </div>
          <sheet-grid></sheet-grid>
          <div class="sheets">
            <div class="nav">${ic(6, 9, svg`<path d="M6 0V9L0 4.500Z" fill="#c2c2c2"/>`)}${ic(6, 9, svg`<path d="M0 0V9L6 4.500Z" fill="#c2c2c2"/>`)}</div>
            ${[1, 2, 3, 4, 5, 6, 7, 8, 9].map((n) => html`<div class=${classMap({ sh: true, on: n === 1 })}>Sheet${n}</div>`)}
            ${ic(21, 21, svg`<circle cx="10.500" cy="10.500" r="9.300" stroke="#8a8a8a" stroke-width="1.400"/><path d="M10.500 5.500V15.500M5.500 10.500H15.500" stroke="#777" stroke-width="2"/>`, "add")}
            ${ic(2, 14, svg`<path d="M1 0V14" stroke="#aaa" stroke-width="2" stroke-dasharray="2 3.500"/>`, "grip")}
            <div class="hs"><div class="hb">${ic(6, 9, svg`<path d="M6 0V9L0 4.500Z" fill="#555"/>`)}</div><div class="ht"></div><div class="hb">${ic(6, 9, svg`<path d="M0 0V9L6 4.500Z" fill="#555"/>`)}</div></div>
          </div>
          <div class="status">준비
            ${ic(18, 17, svg`<circle cx="4" cy="4" r="4" fill="#777"/><path d="M9 2H17V5H9Z" fill="#777"/><rect x="2.500" y="6" width="14" height="10" fill="#fff" stroke="#888"/><path d="M4 9H15M4 11.500H15M4 14H15" stroke="#999" stroke-dasharray="2 1"/>`, "macro")}
            <div class="grow"></div>
            <div class="view on">${ic(18, 17, svg`<path d="M1 1H17V16H1ZM1 6H17M1 11H17M6.300 1V16M11.600 1V16" stroke="#777" stroke-width="1.500"/>`)}</div>
            <div class="view">${ic(18, 17, svg`<rect x="1" y="1" width="16" height="15" stroke="#777" stroke-width="1.500"/><rect x="4.500" y="3.500" width="9" height="10" stroke="#777" stroke-width="1.200"/><path d="M6 6H12M6 8.500H12M6 11H12" stroke="#777"/>`)}</div>
            <div class="view">${ic(19, 17, svg`<rect x="1" y="1" width="17" height="15" stroke="#777" stroke-width="1.500"/><path d="M1 10H12V1M6.500 1V7" stroke="#777" stroke-width="1.400"/>`)}</div>
            ${ic(166, 16, svg`<path d="M7 8H15" stroke="#666" stroke-width="2.600"/><path d="M20 7.500H149" stroke="#999" stroke-width="1.200"/><rect x="82" y="0" width="5" height="15" fill="#666"/><path d="M154.500 8H164.500M159.500 3V13" stroke="#666" stroke-width="2.400"/>`)}
            <div class="pct">100 %</div>
          </div>
          <div class="strip"></div>
          <ink-layer class="ink"></ink-layer>
          <div class="spot"></div>
          ${ic(28, 44, svg`<path d="M11 26L18 40" stroke="#111" stroke-width="6" stroke-linecap="round"/><path d="M2 3L24.500 26H14L2 34.500Z" fill="#1212fa" stroke="#1c1c58" stroke-width="1.500"/>`, "ptr")}
        </div></div>
        <div class="seek"><div class="done"><div class="knob"></div></div><div class="left"></div></div>
        <div class="ctl">
          ${ic(20, 22, svg`<path d="M0 1L19 11L0 21Z" fill="#dcdcdc"/>`)}
          <div class="paused">Paused</div><div class="time">00:13:43</div><div class="total"><i>/</i>00:32:47</div>
          <div class="skip">${ic(7, 12, svg`<path d="M7 0V12L0 6Z" fill="#777"/>`)}<span>30</span>${ic(7, 12, svg`<path d="M0 0V12L7 6Z" fill="#777"/>`)}</div>
          <div class="bar"></div>
          <div class="speeds">${["0.6", "0.8", "1.0", "1.2", "1.4", "1.6", "1.8", "2.0"].map((s) => html`<div class=${classMap({ sp: true, on: s === "2.0" })}>${s}</div>`)}</div>
          <div class="bar"></div>
          ${ic(25, 20, svg`<path d="M2 12C0 6 4 4 9 4H17M23 8C25 14 21 16 16 16H8" stroke="#cfcfcf" stroke-width="3"/><path d="M15 0L22 4L15 9ZM10 11L3 16L10 20Z" fill="#cfcfcf"/>`, "loop")}
          ${ic(19, 19, svg`<path d="M0 0H7L0 7ZM12 0H19V7ZM0 12L7 19H0ZM19 12V19H12Z" fill="#d8d8d8"/><path d="M2 2L8 8M17 2L11 8M2 17L8 11M17 17L11 11" stroke="#d8d8d8" stroke-width="2.800"/>`, "full")}
          ${ic(80, 16, svg`<path d="M0 5H4L11 0V16L4 11H0Z" fill="#40e010"/>${[...Array(13)].map((_, i) => svg`<rect x=${16 + i * 5} y="3" width="2.600" height="10" fill=${i > 11 ? "#3c3c3c" : "#36b80f"}/>`)}`, "vol")}
        </div>
      </div>
      <div class="task">
        ${TASKS.map((t) => html`<div class="ti ${t.cls ?? ""}">${t.i}</div>`)}
        <div class="tray">
          ${ic(16, 9, svg`<path d="M.5 8.500L8 1L15.500 8.500" stroke="#fff" stroke-width="1.400"/>`, "t1")}
          ${ic(20, 14, svg`<circle cx="10" cy="6" r="5.500" fill="#aaa"/><path d="M4 14C-1 14 -1 7 4 7C7 3 12 5 13 8C18 5 21 8 20 11C19 14 18 14 15 14Z" fill="#fff"/>`, "t2")}
          ${ic(16, 16, svg`<path d="M1 15C1 7 7 1 15 1M5 15C5 9 9 5 15 5M9 15C9 11 11 9 15 9" stroke="#ddd" stroke-width="1.300"/><circle cx="14" cy="14" r="1.800" fill="#fff"/>`, "t1")}
          ${ic(20, 14, svg`<path d="M5 2.500H18V12.500H4V7" stroke="#fff" stroke-width="1.300"/><rect x="7" y="4.500" width="9" height="6" fill="#fff"/><path d="M19.300 5V10M1 0V3M4 0V3M0 3H5V5L2.500 7Z" stroke="#fff" stroke-width="1.300"/>`, "t4")}
          ${ic(21, 16, svg`<path d="M1 5.500H3L7 2V14L3 10.500H1Z" stroke="#fff" stroke-width="1.200"/><path d="M10 5.500C11.500 7 11.500 9 10 10.500M13 3C16 6 16 10 13 13M16.500 1C21 5 21 11 16.500 15" stroke="#fff" stroke-width="1.200"/>`, "t4")}
          ${ic(20, 20, svg`<path d="M7 14C8 10 13 2 15 1C18 0 17 4 15 6L9 16L6 19M10 8C3 10 0 14 1 17C3 20 7 17 8 13M15 8H18C20 9 19 12 16 11L13 10" stroke="#fff" stroke-width="1.300"/>`, "t5")}
          <div class="ka">A</div><div class="clock">오후 9:08</div>
          ${ic(20, 20, svg`<path d="M1 1H19V15H13L10 18.500L7 15H1Z" stroke="#fff" stroke-width="1.300"/>`, "note")}
          <div class="peek"></div>
        </div>
      </div>
    </div>`;
  }
}
